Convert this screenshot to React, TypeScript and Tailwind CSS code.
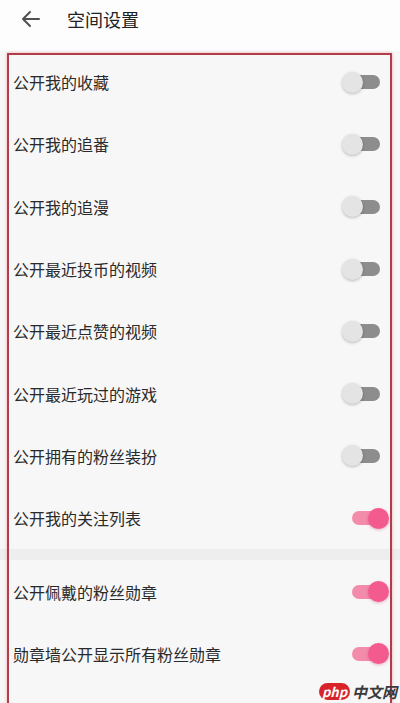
import React from "react";

type Item = { label: string; on: boolean };

const groupA: Item[] = [
  { label: "公开我的收藏", on: false },
  { label: "公开我的追番", on: false },
  { label: "公开我的追漫", on: false },
  { label: "公开最近投币的视频", on: false },
  { label: "公开最近点赞的视频", on: false },
  { label: "公开最近玩过的游戏", on: false },
  { label: "公开拥有的粉丝装扮", on: false },
  { label: "公开我的关注列表", on: true },
];

const groupB: Item[] = [
  { label: "公开佩戴的粉丝勋章", on: true },
  { label: "勋章墙公开显示所有粉丝勋章", on: true },
];

// material-style switch: the thumb overlaps one end of the track
function Toggle({ on }: { on: boolean }) {
  if (on) {
    return (
      <div className="flex items-center w-[46px] pl-[10px]">
        <div className="w-[34px] h-[14px] rounded-full bg-[#f38bab] shrink-0" />
        <div className="-ml-[18px] w-[21px] h-[21px] rounded-full bg-[#f35b8f] shadow-[0_1px_3px_rgba(200,40,100,0.35)] shrink-0" />
      </div>
    );
  }
  return (
    <div className="flex items-center w-[46px]">
      <div className="relative z-10 w-[21px] h-[21px] rounded-full bg-[#e4e4e4] shadow-[0_1px_3px_rgba(0,0,0,0.25)] shrink-0" />
      <div className="-ml-[18px] w-[35px] h-[14px] rounded-full bg-[#8d8d8d] shrink-0" />
    </div>
  );
}

function Row({ item }: { item: Item }) {
  return (
    <div className="h-[62.3px] flex items-center justify-between pl-[13px] pr-[12px]">
      <span className="text-[16px] text-[#2a2a2a] leading-none">{item.label}</span>
      <Toggle on={item.on} />
    </div>
  );
}

export default function App() {
  return (
    <div
      className="relative w-[400px] h-[703px] overflow-hidden bg-[#f7f7f7]"
      style={{ fontFamily: '"Noto Sans CJK SC", "Noto Sans", sans-serif' }}
    >
      <header className="h-[51px] bg-[#fdfdfd] flex items-start pt-[8px]">
        <svg
          width="22"
          height="22"
          viewBox="0 0 22 22"
          className="ml-[19px]"
          fill="none"
          stroke="#505050"
          strokeWidth="2"
          strokeLinecap="round"
          strokeLinejoin="round"
        >
          <path d="M20 11H4M11 4L4 11L11 18" />
        </svg>
        <h1 className="ml-[26px] text-[18px] leading-[22px] text-[#222]">空间设置</h1>
      </header>

      <div>
        {groupA.map((it) => (
          <Row key={it.label} item={it} />
        ))}
      </div>
      <div className="h-[11px] bg-[#eeeeee]" />
      <div>
        {groupB.map((it) => (
          <Row key={it.label} item={it} />
        ))}
      </div>

      {/* red highlight frame drawn over the settings list */}
      <div className="absolute left-[7px] top-[53px] w-[385px] h-[700px] border-2 border-[#b23c48] shadow-[0_0_3px_rgba(240,120,130,0.6)] pointer-events-none" />

      {/* site watermark */}
      <div className="absolute right-[3px] bottom-[3px] flex items-center gap-[2px]">
        <span className="w-[31px] h-[17px] rounded-full bg-[#d9232b] text-white text-[13px] italic font-bold leading-[17px] text-center">
          php
        </span>
        <span className="text-[15px] italic font-bold text-[#3a3a3a] leading-none">中文网</span>
      </div>
    </div>
  );
}
